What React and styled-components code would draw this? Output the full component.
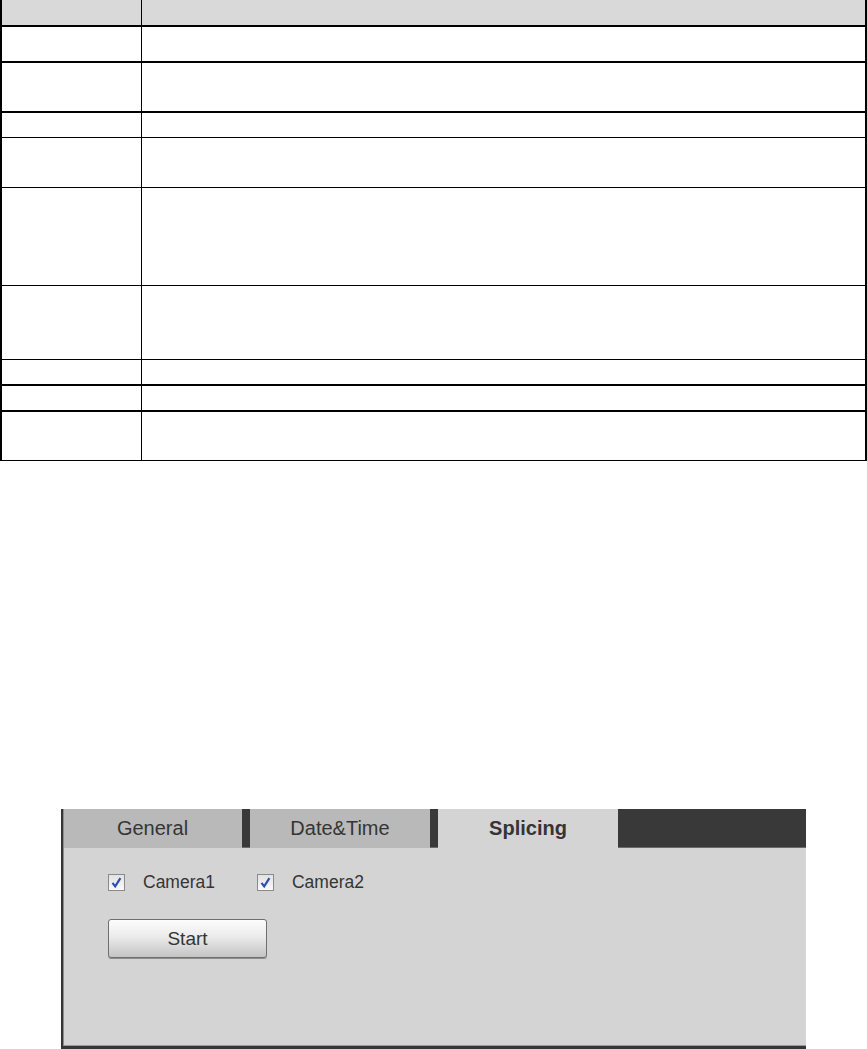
import styled, { createGlobalStyle } from 'styled-components';

const GlobalStyle = createGlobalStyle`
  html, body {
    margin: 0;
    padding: 0;
    background: #fff;
    overflow: hidden;
  }
  body {
    font-family: "Liberation Sans", Arial, sans-serif;
  }
`;

const Page = styled.div`
  width: 867px;
  height: 1049px;
  display: flex;
  flex-direction: column;
`;

const Table = styled.div`
  width: 867px;
  box-sizing: border-box;
  border-left: 2px solid #000;
  border-right: 2px solid #000;
  display: flex;
  flex-direction: column;
`;

const Row = styled.div`
  display: grid;
  grid-template-columns: 140px 1fr;
  height: ${(p) => p.h}px;
  border-bottom: ${(p) => (p.thick ? 2 : 1)}px solid #000;
  background: ${(p) => (p.head ? '#d9d9d9' : '#fff')};
`;

const Cell = styled.div`
  border-right: ${(p) => (p.first ? '1px solid #000' : 'none')};
`;

const Panel = styled.div`
  margin-top: 348px;
  margin-left: 61px;
  width: 745px;
  height: 240px;
  box-sizing: border-box;
  background: #d4d4d4;
  border-left: 2px solid #363636;
  border-bottom: 3px solid #363636;
  box-shadow: inset 1px 0 0 #8c8c8c, inset 0 -1px 0 #9a9a9a;
  display: flex;
  flex-direction: column;
`;

const TabBar = styled.div`
  display: flex;
  gap: 8px;
  height: 39px;
  background: #393939;
  box-shadow: inset 0 -1px 0 #6a6a6a;
`;

const Tab = styled.div`
  width: ${(p) => (p.first ? 179 : 180)}px;
  display: flex;
  align-items: center;
  justify-content: center;
  font-size: 20px;
  font-weight: ${(p) => (p.active ? 700 : 400)};
  color: #353535;
  background: ${(p) => (p.active ? '#d4d4d4' : '#b9b9b9')};
  box-shadow: ${(p) => (p.first ? 'inset 1px 0 0 #8c8c8c' : 'none')};
`;

const Body = styled.div`
  padding: 25px 0 0 45px;
  display: flex;
  flex-direction: column;
  gap: 27px;
`;

const Options = styled.div`
  display: flex;
  align-items: center;
  height: 19px;
`;

const Option = styled.label`
  display: flex;
  align-items: center;
  gap: 18px;
  margin-right: 42px;
  font-size: 17.5px;
  color: #353535;
`;

const Box = styled.span`
  width: 17px;
  height: 17px;
  box-sizing: border-box;
  border: 1px solid #8a8a8a;
  background: linear-gradient(#e2e2e2, #fafafa);
  display: flex;
  align-items: center;
  justify-content: center;
`;

const Button = styled.button`
  width: 159px;
  height: 39px;
  box-sizing: border-box;
  border: 1px solid #6e6e6e;
  border-radius: 3px;
  background: linear-gradient(#fcfcfc, #ebebeb 45%, #c4c4c4);
  box-shadow: 0 1px 0 #8e8e8e;
  font-family: "Liberation Sans", Arial, sans-serif;
  font-size: 19px;
  color: #353535;
  padding: 0;
`;

const rows = [
  { h: 25, thick: true, head: true },
  { h: 34, thick: true },
  { h: 48, thick: true },
  { h: 24 },
  { h: 49 },
  { h: 97 },
  { h: 73 },
  { h: 24, thick: true },
  { h: 24, thick: true },
  { h: 48 },
];

const Check = ({ label }) => (
  <Option>
    <Box>
      <svg width="13" height="13" viewBox="0 0 13 13">
        <path d="M2.5 6.8 L5.2 10.3 L10.4 2.2" fill="none" stroke="#2f4fae" strokeWidth="2.2" />
      </svg>
    </Box>
    {label}
  </Option>
);

export default function App() {
  return (
    <Page>
      <GlobalStyle />
      <Table>
        {rows.map((r, i) => (
          <Row key={i} h={r.h} thick={r.thick} head={r.head}>
            <Cell first />
            <Cell />
          </Row>
        ))}
      </Table>
      <Panel>
        <TabBar>
          <Tab first>General</Tab>
          <Tab>Date&amp;Time</Tab>
          <Tab active>Splicing</Tab>
        </TabBar>
        <Body>
          <Options>
            <Check label="Camera1" />
            <Check label="Camera2" />
          </Options>
          <div>
            <Button>Start</Button>
          </div>
        </Body>
      </Panel>
    </Page>
  );
}
